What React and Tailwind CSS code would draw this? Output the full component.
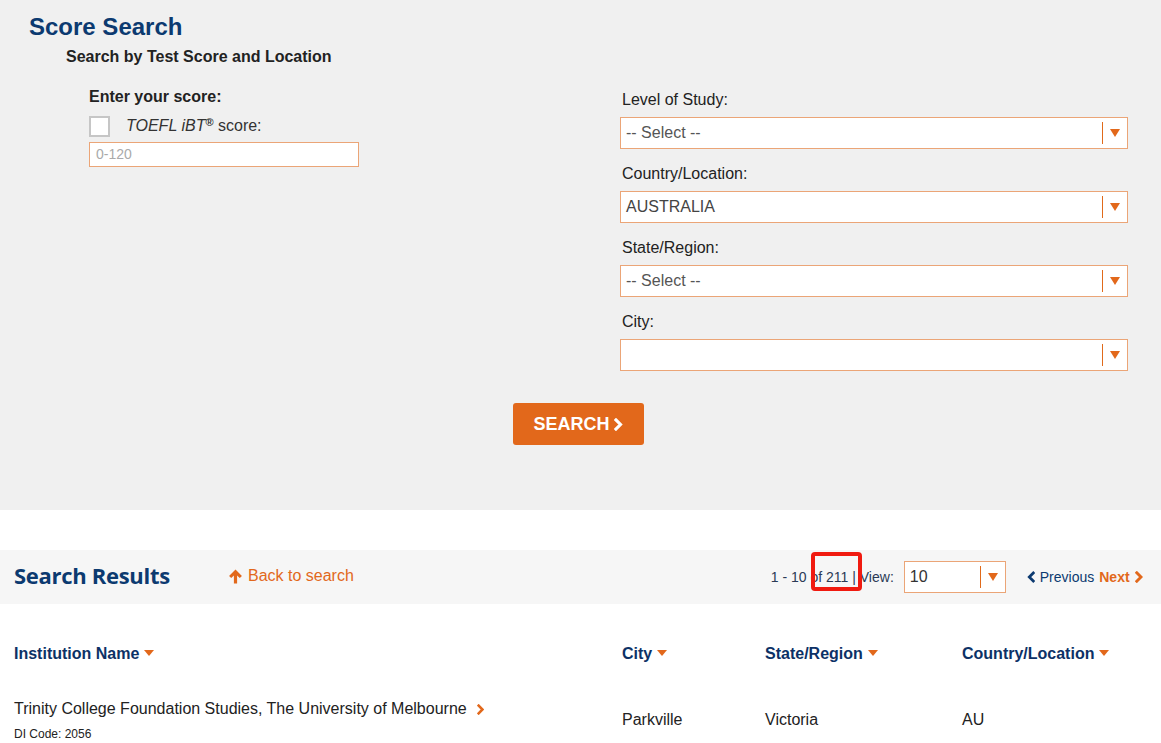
import React from 'react';

const ORANGE = '#e2681b';

function Caret({ className = '' }) {
  return (
    <svg width="10" height="8" viewBox="0 0 10 8" className={className}>
      <polygon points="0,0 10,0 5,8" fill={ORANGE} />
    </svg>
  );
}

function SortCaret() {
  return (
    <svg width="10" height="6" viewBox="0 0 10 6" className="inline-block ml-[5px] mb-[3px]">
      <polygon points="0,0 10,0 5,6" fill={ORANGE} />
    </svg>
  );
}

function Chevron({ color, className = '', size = 10 }) {
  return (
    <svg width={size * 0.7} height={size} viewBox="0 0 7 10" className={className}>
      <polyline points="1.5,1.5 5,5 1.5,8.5" fill="none" stroke={color} strokeWidth="2.4" strokeLinecap="square" />
    </svg>
  );
}

function ChevronLeft({ color }) {
  return (
    <svg width="8" height="12" viewBox="0 0 7 10" className="inline-block mr-[5px] mb-[1px]">
      <polyline points="5.5,1.5 2,5 5.5,8.5" fill="none" stroke={color} strokeWidth="2.4" strokeLinecap="square" />
    </svg>
  );
}

function Select({ value, muted }) {
  return (
    <div className="h-[32px] border border-[#eba577] bg-white flex items-center">
      <div className={`flex-1 pl-[5px] text-[16px] ${muted ? 'text-[#555]' : 'text-[#444]'}`}>{value}</div>
      <div className="w-[25px] h-[22px] border-l border-[#e06a1b] flex items-center justify-center">
        <Caret />
      </div>
    </div>
  );
}

function Field({ label, value, muted }) {
  return (
    <div>
      <div className="text-[16px] text-[#222] leading-[20px] mb-[7px] pl-[2px]">{label}</div>
      <Select value={value} muted={muted} />
    </div>
  );
}

export default function App() {
  return (
    <div className="w-[1161px] min-h-[743px] bg-white text-[#222]" style={{ fontFamily: '"Liberation Sans", Arial, sans-serif' }}>
      {/* Search form */}
      <section className="bg-[#f0f0f0] h-[510px] pl-[29px] pt-[13px]">
        <h1 className="text-[24px] font-bold text-[#0c3a70] leading-[28px]">Score Search</h1>
        <h2 className="ml-[37px] mt-[6px] text-[16px] font-bold text-[#222] leading-[20px]">Search by Test Score and Location</h2>

        <div className="flex mt-[20px]">
          <div className="ml-[60px] w-[270px]">
            <div className="text-[16px] font-bold leading-[20px]">Enter your score:</div>
            <div className="flex items-center mt-[7px]">
              <span className="w-[21px] h-[21px] bg-white border-2 border-[#c6c6c6]" />
              <span className="ml-[16px] text-[16px] text-[#333]">
                <i>TOEFL iBT</i><sup className="text-[11px] font-bold">®</sup> score:
              </span>
            </div>
            <div className="mt-[4px] h-[25px] bg-white border border-[#eba577] flex items-center pl-[6px] text-[14px] text-[#aaa]">0-120</div>
          </div>

          <div className="ml-auto w-[508px] mr-[33px] pt-[3px] flex flex-col gap-[15px]">
            <Field label="Level of Study:" value="-- Select --" muted />
            <Field label="Country/Location:" value="AUSTRALIA" />
            <Field label="State/Region:" value="-- Select --" muted />
            <Field label="City:" value="" />
          </div>
        </div>

        <div className="flex justify-center pr-[33px] mt-[32px]">
          <button className="w-[131px] h-[42px] bg-[#e2681b] rounded-[3px] text-white text-[18px] font-bold flex items-center justify-center gap-[5px]">
            SEARCH
            <Chevron color="#fff" size={13} />
          </button>
        </div>
      </section>

      {/* Results bar */}
      <div className="mt-[40px] h-[54px] bg-[#f6f6f6] flex items-center pl-[14px] pr-[18px] relative">
        <div className="text-[22px] font-bold text-[#0c3a70] w-[214px] tracking-[-0.3px] mb-[3px]" style={{ fontFamily: '"Open Sans", Lato, sans-serif' }}>Search Results</div>
        <a className="flex items-center text-[16px] text-[#e2681b] mb-[2px]">
          <svg width="15" height="15" viewBox="0 0 13 14" className="mr-[5px]">
            <path d="M6.5 0.5 L12.5 6.5 L10.5 8.5 L8 6 L8 13.5 L5 13.5 L5 6 L2.5 8.5 L0.5 6.5 Z" fill={ORANGE} />
          </svg>
          Back to search
        </a>
        <div className="ml-auto flex items-center text-[14px] text-[#2b3a55]">
          <span>1 - 10 of 211 | View:</span>
          <div className="ml-[10px] w-[102px] h-[32px] border border-[#eba577] bg-white flex items-center">
            <div className="flex-1 pl-[5px] text-[16px] text-[#333]">10</div>
            <div className="w-[25px] h-[22px] border-l border-[#e06a1b] flex items-center justify-center">
              <Caret />
            </div>
          </div>
          <span className="ml-[21px] flex items-center text-[#0c3a70]">
            <ChevronLeft color="#0c3a70" />Previous
          </span>
          <span className="ml-[5px] flex items-center font-bold text-[#e2681b]">
            Next<Chevron color={ORANGE} className="ml-[5px]" size={12} />
          </span>
        </div>
        {/* highlight box */}
        <div className="absolute left-[811px] top-[2px] w-[51px] h-[39px] border-[4px] border-[#f01a10] rounded-[4px]" />
      </div>

      {/* Table */}
      <div className="pl-[14px] pt-[40px]">
        <div className="grid grid-cols-[608px_143px_197px_1fr] text-[16px] font-bold text-[#0c3166] leading-[20px]">
          <div>Institution Name<SortCaret /></div>
          <div>City<SortCaret /></div>
          <div>State/Region<SortCaret /></div>
          <div>Country/Location<SortCaret /></div>
        </div>
        <div className="grid grid-cols-[608px_143px_197px_1fr] text-[16px] text-[#222] mt-[35px]">
          <div>
            <div className="flex items-center leading-[20px]">
              Trinity College Foundation Studies, The University of Melbourne
              <Chevron color={ORANGE} className="ml-[10px]" size={11} />
            </div>
            <div className="text-[12px] mt-[6px]">DI Code: 2056</div>
          </div>
          <div className="pt-[9px]">Parkville</div>
          <div className="pt-[9px]">Victoria</div>
          <div className="pt-[9px]">AU</div>
        </div>
      </div>
    </div>
  );
}
